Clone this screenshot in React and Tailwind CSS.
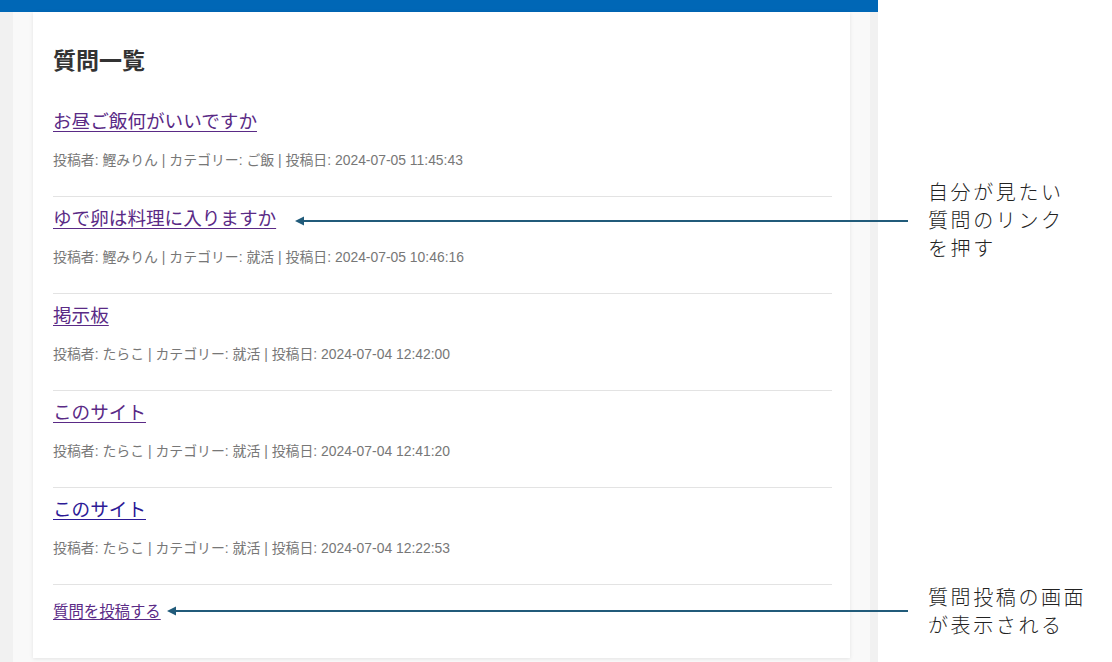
export default function App() {
  const items = [
    { title: "お昼ご飯何がいいですか", meta: "投稿者: 鰹みりん | カテゴリー: ご飯 | 投稿日: 2024-07-05 11:45:43", color: "text-[#5a2a86]" },
    { title: "ゆで卵は料理に入りますか", meta: "投稿者: 鰹みりん | カテゴリー: 就活 | 投稿日: 2024-07-05 10:46:16", color: "text-[#5a2a86]" },
    { title: "掲示板", meta: "投稿者: たらこ | カテゴリー: 就活 | 投稿日: 2024-07-04 12:42:00", color: "text-[#5a2a86]" },
    { title: "このサイト", meta: "投稿者: たらこ | カテゴリー: 就活 | 投稿日: 2024-07-04 12:41:20", color: "text-[#5a2a86]" },
    { title: "このサイト", meta: "投稿者: たらこ | カテゴリー: 就活 | 投稿日: 2024-07-04 12:22:53", color: "text-[#2c1a96]" },
  ];
  return (
    <div
      className="relative flex w-[1112px] h-[662px] overflow-hidden bg-white"
      style={{ fontFamily: '"Liberation Sans", "Noto Sans CJK JP", sans-serif' }}
    >
      <div className="w-[878px] h-full bg-[#f1f1f1] flex flex-col shrink-0">
        <div className="h-[12px] bg-[#0067b6] shrink-0" />
        <div className="ml-[13px] w-[857px] flex-1 bg-[#f9f9f9] px-[20px]">
          <div className="bg-white h-[646px] shadow-[0_1px_4px_rgba(0,0,0,0.09)] pl-[20px] pr-[18px] pt-[34px]">
            <h2 className="text-[23px] font-bold leading-[30px] text-[#333]">質問一覧</h2>
            <ul className="mt-[24px]">
              {items.map((it, i) => (
                <li key={i} className="border-b border-[#e3e3e3] h-[97px] pt-[8px]">
                  <a href="#" className={`block w-fit text-[18.6px] leading-[27px] underline underline-offset-[3px] ${it.color}`}>
                    {it.title}
                  </a>
                  <p className="mt-[15px] text-[13.9px] leading-[21px] text-[#777]">{it.meta}</p>
                </li>
              ))}
            </ul>
            <div className="pt-[15px]">
              <a href="#" className="text-[15.4px] leading-[20px] underline underline-offset-[2px] text-[#5a2a86]">
                質問を投稿する
              </a>
            </div>
          </div>
        </div>
      </div>
      <div className="flex-1 bg-white" />

      <svg className="absolute left-0 top-0 pointer-events-none" width="1112" height="662">
        <line x1="302" y1="221" x2="908" y2="221" stroke="#215b7a" strokeWidth="2.2" />
        <polygon points="295,221 304,216.5 304,225.5" fill="#215b7a" />
        <line x1="174" y1="611" x2="908" y2="611" stroke="#215b7a" strokeWidth="2.2" />
        <polygon points="167,611 176,606.5 176,615.5" fill="#215b7a" />
      </svg>

      <div className="absolute left-[928px] top-[178px] text-[20px] leading-[28px] tracking-[2.6px] text-[#222] font-light" style={{ fontFamily: '"Noto Sans CJK JP", sans-serif' }}>
        <div>自分が見たい</div>
        <div>質問のリンク</div>
        <div>を押す</div>
      </div>
      <div className="absolute left-[928px] top-[583px] text-[20px] leading-[28px] tracking-[2.6px] text-[#222] font-light" style={{ fontFamily: '"Noto Sans CJK JP", sans-serif' }}>
        <div>質問投稿の画面</div>
        <div>が表示される</div>
      </div>
    </div>
  );
}
